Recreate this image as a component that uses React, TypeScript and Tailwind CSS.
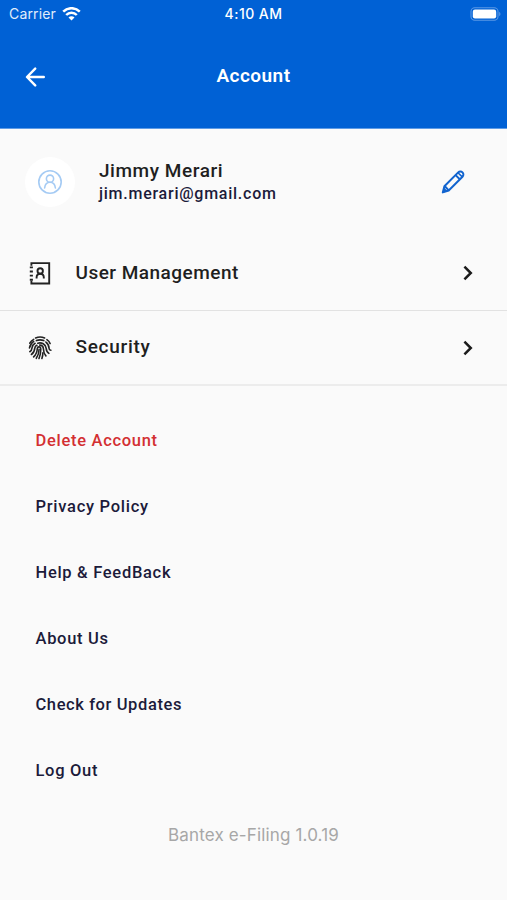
import type { ReactNode } from "react";

interface MenuRowProps {
  icon: ReactNode;
  label: string;
  labelClass: string;
}

const LINKS = [
  { label: "Delete Account", className: "text-[#d32f32] tracking-[0.7px]" },
  { label: "Privacy Policy", className: "text-[#1c1b3a] tracking-[0.72px]" },
  { label: "Help & FeedBack", className: "text-[#1c1b3a] tracking-[0.7px]" },
  { label: "About Us", className: "text-[#1c1b3a] tracking-[0.7px]" },
  { label: "Check for Updates", className: "text-[#1c1b3a] tracking-[0.6px]" },
  { label: "Log Out", className: "text-[#1c1b3a] tracking-[0.7px]" },
];

function WifiIcon() {
  return (
    <svg className="h-[14px] w-[19px]" viewBox="0 0 19 14" fill="none" stroke="white" strokeWidth="2.5">
      <path d="M1.2 4.6a11.8 11.8 0 0 1 16.6 0" />
      <path d="M4.2 8a7.4 7.4 0 0 1 10.6 0" />
      <path d="M9.5 13.6 6.5 10.6a4.2 4.2 0 0 1 6 0Z" fill="white" stroke="none" />
    </svg>
  );
}

function BatteryIcon() {
  return (
    <svg className="h-[14px] w-[31px]" viewBox="0 0 31 14" fill="none">
      <rect x="1" y="0.8" width="27" height="12.4" rx="3.8" stroke="#5a98e5" strokeWidth="1.1" />
      <rect x="2.8" y="2.6" width="23.4" height="8.8" rx="2.2" fill="white" />
      <path d="M29.2 4.8c1.7.8 1.7 3.6 0 4.4Z" fill="#5a98e5" />
    </svg>
  );
}

function BackIcon() {
  return (
    <svg className="h-5 w-5" viewBox="0 0 20 20" fill="none" stroke="white" strokeWidth="2.4" strokeLinecap="round" strokeLinejoin="round">
      <path d="M10.2 1.6 2 10l8.2 8.4M2.4 10h16.4" />
    </svg>
  );
}

function AvatarIcon() {
  return (
    <svg className="h-[26px] w-[26px]" viewBox="0 0 26 26" fill="none" stroke="#a5cbf4" strokeWidth="1.6" strokeLinecap="round">
      <circle cx="13" cy="13" r="11.2" />
      <circle cx="13" cy="9.7" r="3.6" />
      <path d="M7.6 19c.5-3.7 2.4-5.7 5.4-5.7s4.9 2 5.4 5.7" />
    </svg>
  );
}

function PencilIcon() {
  return (
    <svg className="h-6 w-6" viewBox="0 0 24 24" fill="none" stroke="#1264cf" strokeWidth="2" strokeLinejoin="round">
      <path d="M1.8 22.4 3.4 16.2 17.2 2.4c1.1-1.1 3.1-1.2 4.3 0s1.1 3.2 0 4.3L7.7 20.5Z" />
      <path d="m3.6 16 4.2 4.4M14.6 5.1l4.2 4.2" />
      <path d="m17 2.7 4.2 4.2" strokeWidth="1.5" />
      <path d="m1.8 22.4 1.4-4.4 2.9 3Z" fill="#1264cf" strokeWidth="0.8" />
    </svg>
  );
}

function ContactsIcon() {
  return (
    <svg className="h-6 w-6" viewBox="0 0 24 24" fill="none" stroke="#222" strokeWidth="1.9">
      <path d="M3.4 4.8V2.1h17.8v20.4H3.4v-2.7" />
      <path d="M1.8 6.4h3.1M1.8 10.5h3.1M1.8 14.6h3.1M1.8 18.7h3.1" />
      <circle cx="12.2" cy="10" r="2.7" />
      <path d="M8.6 17.4v-.9c0-2.4 1.3-3.8 3.6-3.8s3.6 1.4 3.6 3.8v.9" />
    </svg>
  );
}

function FingerprintIcon() {
  return (
    <svg className="h-6 w-6" viewBox="0 0 24 24" fill="none" stroke="#222" strokeWidth="1.6" strokeLinecap="round">
      <path d="M7.6 2c2.8-1.2 6.2-1.2 9 0" />
      <path d="M1.8 7.2C2.8 5.4 4 4.3 5.7 3.4M18.9 3.6c1.5 1 2.6 2.3 3.2 4" />
      <path d="M1.5 11.9c.5-2.8 2-5.1 4.2-6.5M8.4 4.6c2.2-.9 5.1-.9 7.4 0" />
      <path d="M17.9 6.1c2.3 1.7 3.1 3.9 3.2 6.4 0 1 .5 1.6 1.8 1.7" />
      <path d="M1.8 15.7c1.6-1 2.1-2.4 2.3-4.1.3-2 1.4-3.4 3-4.3M9.8 7.2c3.8-1.1 7.9 1 8.4 5.2.1 2.5.8 3.8 2.7 5" />
      <path d="M3.4 18.5c2-1.4 3.2-3.8 3.4-6.4.2-1.4 1-2.3 2.1-2.8M11.7 9.1c2.2.1 3.6 1.5 3.7 3.6.1 2.9.8 5.3 2.5 7.2" />
      <path d="M5.6 20.9c2.4-2.4 3.6-5.2 3.7-8.5.1-1 .9-1.6 1.9-1.5 1 .1 1.6.8 1.6 2 0 3.4-.3 5.9-1.8 9.6" />
      <path d="M8.3 22.3c2-2.8 2.7-5.5 2.8-9.1M14.9 16.7c0 2-.4 3.9-1 5.8" />
    </svg>
  );
}

function ChevronIcon() {
  return (
    <svg className="h-[16px] w-[10px]" viewBox="0 0 10 16" fill="none" stroke="#1b1b1b" strokeWidth="2.5">
      <path d="m1.4 1.6 6.4 6.4-6.4 6.4" />
    </svg>
  );
}

function MenuRow({ icon, label, labelClass }: MenuRowProps) {
  return (
    <button className="flex h-full w-full items-center pl-7 pr-[34px] text-left" type="button">
      <span className="flex w-[47.5px] items-center">{icon}</span>
      <span className={`flex-1 text-[19px] leading-6 font-medium text-[#1f1f1f] ${labelClass}`}>
        {label}
      </span>
      <ChevronIcon />
    </button>
  );
}

function App() {
  return (
    <div className="flex h-[900px] w-full flex-col overflow-hidden bg-[#fafafa] font-['Roboto',sans-serif]">
      <header className="h-[129px] flex-none border-b border-[#5f9ce6] bg-[#0061d5] text-white">
        <div className="grid h-7 grid-cols-3 items-center px-[9px] pr-[6px] font-['Inter',sans-serif] text-sm">
          <div className="flex items-center gap-[6px]">
            <span className="tracking-[0.15px] text-[#e1edfb]">Carrier</span>
            <WifiIcon />
          </div>
          <span className="-ml-[3px] text-center text-sm font-medium tracking-[0.45px]">4:10 AM</span>
          <div className="flex justify-end">
            <BatteryIcon />
          </div>
        </div>
        <div className="grid h-[98px] grid-cols-3 items-center px-[25px]">
          <button type="button" aria-label="Back">
            <BackIcon />
          </button>
          <h1 className="pb-0.5 text-center text-[19px] leading-6 font-semibold tracking-[0.45px]">Account</h1>
        </div>
      </header>

      <section className="flex h-[106px] flex-none items-center pl-[25px] pr-[42px]">
        <div className="flex h-[50px] w-[50px] items-center justify-center rounded-full bg-white">
          <AvatarIcon />
        </div>
        <div className="ml-6 flex-1 pt-0.5">
          <p className="text-[19px] leading-[22px] font-medium tracking-[0.55px] text-[#1f1f1f]">Jimmy Merari</p>
          <p className="text-base leading-6 font-medium tracking-[0.75px] text-[#1c1b3a]">jim.merari@gmail.com</p>
        </div>
        <PencilIcon />
      </section>

      <nav className="flex-none">
        <div className="h-[76px] border-b border-[#e2e2e2]">
          <MenuRow icon={<ContactsIcon />} label="User Management" labelClass="tracking-[0.48px]" />
        </div>
        <div className="h-[75px] border-b-2 border-[#ececec]">
          <MenuRow icon={<FingerprintIcon />} label="Security" labelClass="pb-0.5 tracking-[0.7px]" />
        </div>
      </nav>

      <ul className="mt-[22px] flex-none pl-[35.5px]">
        {LINKS.map((link) => (
          <li className="flex h-[66px] items-center" key={link.label}>
            <button className={`text-[16.5px] font-medium ${link.className}`} type="button">
              {link.label}
            </button>
          </li>
        ))}
      </ul>

      <p className="mt-[19px] text-center font-['Inter',sans-serif] text-[17px] text-[#a7a7a7] tracking-[0.15px]">
        Bantex e-Filing 1.0.19
      </p>
    </div>
  );
}

export default App;
